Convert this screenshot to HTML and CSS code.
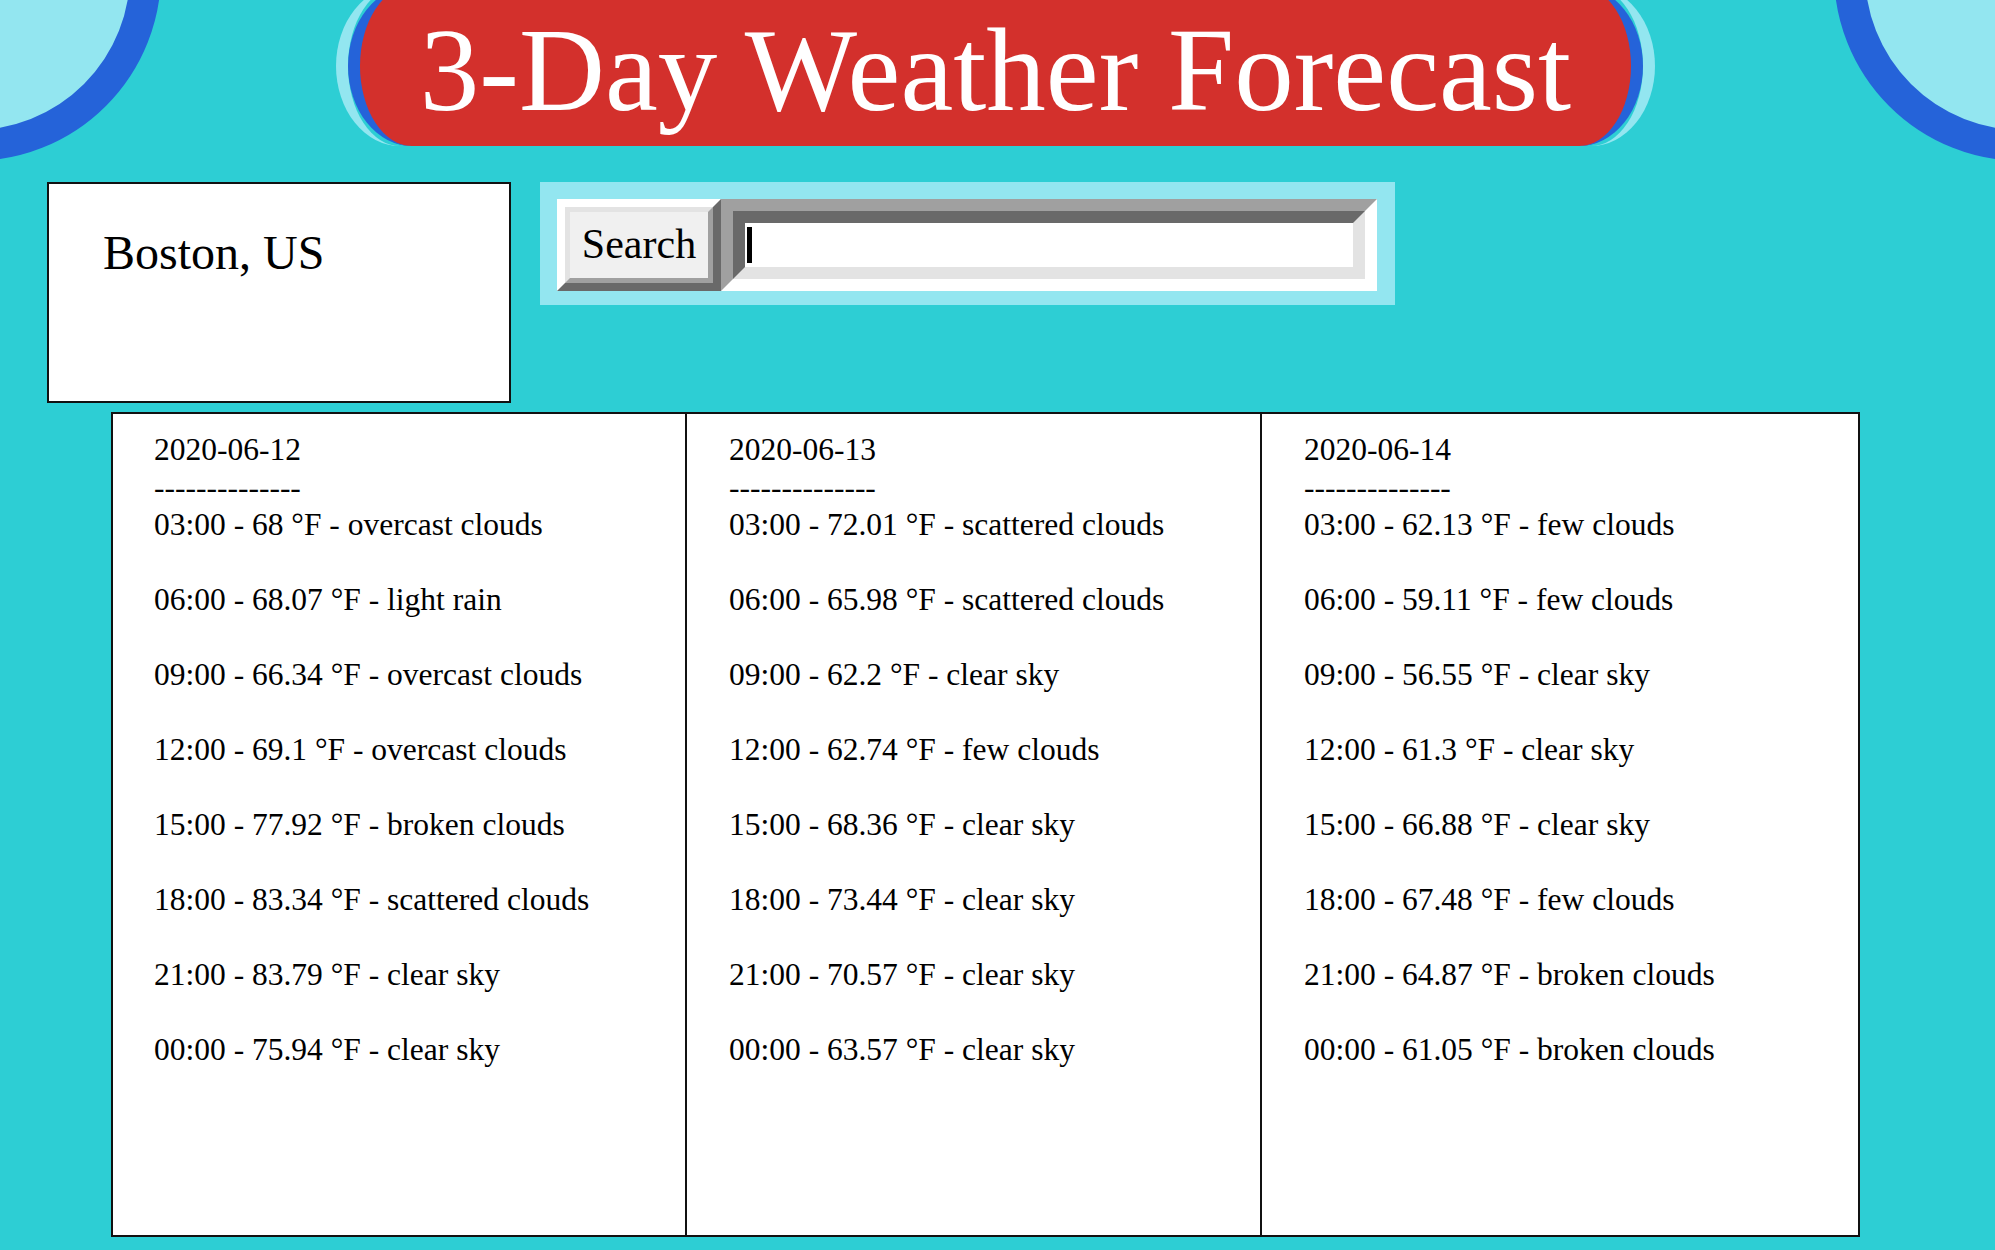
FILE: index.html
```html
<!DOCTYPE html>
<html lang="en">
<head>
<meta charset="utf-8">
<title>3-Day Weather Forecast</title>
<link rel="stylesheet" href="styles.css">
</head>
<body>
<svg class="corner corner-left" width="170" height="170" viewBox="0 0 170 170" aria-hidden="true">
  <circle cx="-27" cy="-27" r="172.5" fill="#93e6f0" stroke="#2563d9" stroke-width="31"/>
</svg>
<svg class="corner corner-right" width="170" height="170" viewBox="0 0 170 170" aria-hidden="true">
  <circle cx="197" cy="-27" r="172.5" fill="#93e6f0" stroke="#2563d9" stroke-width="31"/>
</svg>
<header class="masthead">
  <div class="banner-ring"><h1 class="banner">3-Day Weather Forecast</h1></div>
</header>
<section class="toolbar">
  <div class="city">Boston, US</div>
  <form class="search">
    <button class="search-btn" type="button"><span class="search-face">Search</span></button>
    <div class="field"><input class="field-input" type="text"><span class="caret"></span></div>
  </form>
</section>
<main class="forecast">
  <div class="day">
    <div class="date">2020-06-12</div>
    <div class="rule">--------------</div>
    <ul class="readings">
      <li>03:00 - 68 °F - overcast clouds</li>
      <li>06:00 - 68.07 °F - light rain</li>
      <li>09:00 - 66.34 °F - overcast clouds</li>
      <li>12:00 - 69.1 °F - overcast clouds</li>
      <li>15:00 - 77.92 °F - broken clouds</li>
      <li>18:00 - 83.34 °F - scattered clouds</li>
      <li>21:00 - 83.79 °F - clear sky</li>
      <li>00:00 - 75.94 °F - clear sky</li>
    </ul>
  </div>
  <div class="day">
    <div class="date">2020-06-13</div>
    <div class="rule">--------------</div>
    <ul class="readings">
      <li>03:00 - 72.01 °F - scattered clouds</li>
      <li>06:00 - 65.98 °F - scattered clouds</li>
      <li>09:00 - 62.2 °F - clear sky</li>
      <li>12:00 - 62.74 °F - few clouds</li>
      <li>15:00 - 68.36 °F - clear sky</li>
      <li>18:00 - 73.44 °F - clear sky</li>
      <li>21:00 - 70.57 °F - clear sky</li>
      <li>00:00 - 63.57 °F - clear sky</li>
    </ul>
  </div>
  <div class="day">
    <div class="date">2020-06-14</div>
    <div class="rule">--------------</div>
    <ul class="readings">
      <li>03:00 - 62.13 °F - few clouds</li>
      <li>06:00 - 59.11 °F - few clouds</li>
      <li>09:00 - 56.55 °F - clear sky</li>
      <li>12:00 - 61.3 °F - clear sky</li>
      <li>15:00 - 66.88 °F - clear sky</li>
      <li>18:00 - 67.48 °F - few clouds</li>
      <li>21:00 - 64.87 °F - broken clouds</li>
      <li>00:00 - 61.05 °F - broken clouds</li>
    </ul>
  </div>
</main>
</body>
</html>
```

FILE: styles.css
```css
* {
  box-sizing: border-box;
}

html,
body {
  margin: 0;
  padding: 0;
}

body {
  display: flow-root;
  position: relative;
  width: 1995px;
  height: 1250px;
  overflow: hidden;
  background: #2dced4;
  color: #000;
  font-family: "Liberation Serif", "Times New Roman", serif;
}

/* decorative corner circles */
.corner {
  position: absolute;
  top: 0;
  display: block;
}

.corner-left {
  left: 0;
}

.corner-right {
  right: 0;
}

/* title banner */
.masthead {
  height: 146px;
  overflow: hidden;
}

.banner-ring {
  margin: -14px 0 0 336px;
  width: 1319px;
  height: 160px;
  border-left: 12px solid #93e6f0;
  border-right: 12px solid #93e6f0;
  border-radius: 64px / 80px;
}

.banner {
  margin: 0;
  height: 160px;
  padding-top: 9px;
  background: #d3302c;
  border-left: 12px solid #2563d9;
  border-right: 12px solid #2563d9;
  border-radius: 64px / 80px;
  color: #fff;
  font-size: 119px;
  font-weight: normal;
  line-height: 150px;
  text-align: center;
  white-space: nowrap;
}

/* city + search row */
.toolbar {
  display: flex;
  align-items: flex-start;
  gap: 29px;
  margin: 36px 0 0 47px;
}

.city {
  width: 464px;
  height: 221px;
  padding: 41px 0 0 54px;
  background: #fff;
  border: 2px solid #111;
  font-size: 48px;
  line-height: 55px;
}

.search {
  display: flex;
  width: 855px;
  height: 123px;
  margin: 0;
  padding: 17px;
  background: #93e6f0;
}

.search-btn {
  width: 164px;
  height: 92px;
  padding: 0;
  margin: 0;
  border: 8px solid;
  border-color: #fff #696969 #696969 #fff;
  background: #f0f0f0;
  font: inherit;
  color: #000;
}

.search-face {
  display: block;
  height: 100%;
  border: 5px solid;
  border-color: #e3e3e3 #a0a0a0 #a0a0a0 #e3e3e3;
  background: #f0f0f0;
  font-size: 42px;
  line-height: 64px;
  text-align: center;
}

.field {
  position: relative;
  width: 656px;
  height: 92px;
  border: 12px solid;
  border-color: #a0a0a0 #fff #fff #a0a0a0;
}

.field-input {
  display: block;
  width: 100%;
  height: 100%;
  margin: 0;
  padding: 0;
  border: 12px solid;
  border-color: #696969 #e3e3e3 #e3e3e3 #696969;
  background: #fff;
  outline: none;
  font: inherit;
}

.caret {
  position: absolute;
  left: 14px;
  top: 16px;
  width: 5px;
  height: 36px;
  background: #000;
}

/* forecast table */
.forecast {
  display: grid;
  grid-template-columns: 572px 575px 1fr;
  width: 1749px;
  height: 825px;
  margin: 9px 0 0 111px;
  background: #fff;
  border: 2px solid #111;
}

.day {
  padding: 17px 0 0 41px;
  font-size: 31.5px;
  line-height: 37.5px;
  white-space: nowrap;
}

.day + .day {
  border-left: 2px solid #111;
  padding-left: 42px;
}

.readings {
  list-style: none;
  margin: 0;
  padding: 0;
}

.readings li {
  margin-bottom: 37.5px;
}
```
